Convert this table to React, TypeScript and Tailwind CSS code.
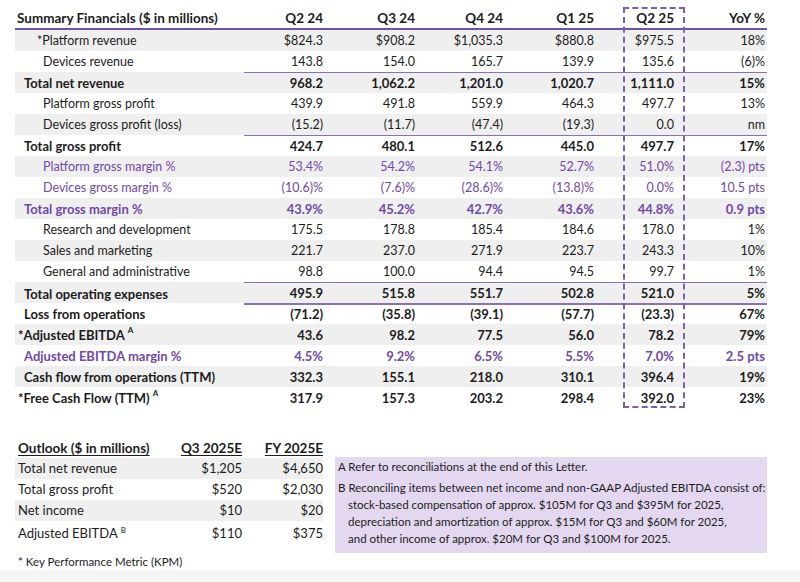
import React from 'react';

type Row = {
  label: string;
  vals: string[];
  main?: boolean;
  purple?: boolean;
  bold?: boolean;
  star?: boolean;
  sup?: string;
  ruleAbove?: boolean;
  ruleBelow?: boolean;
};

const rows: Row[] = [
  { label: 'Platform revenue', star: true, vals: ['$824.3', '$908.2', '$1,035.3', '$880.8', '$975.5', '18%'] },
  { label: 'Devices revenue', vals: ['143.8', '154.0', '165.7', '139.9', '135.6', '(6)%'] },
  { label: 'Total net revenue', main: true, bold: true, ruleAbove: true, vals: ['968.2', '1,062.2', '1,201.0', '1,020.7', '1,111.0', '15%'] },
  { label: 'Platform gross profit', vals: ['439.9', '491.8', '559.9', '464.3', '497.7', '13%'] },
  { label: 'Devices gross profit (loss)', vals: ['(15.2)', '(11.7)', '(47.4)', '(19.3)', '0.0', 'nm'] },
  { label: 'Total gross profit', main: true, bold: true, ruleAbove: true, vals: ['424.7', '480.1', '512.6', '445.0', '497.7', '17%'] },
  { label: 'Platform gross margin %', purple: true, vals: ['53.4%', '54.2%', '54.1%', '52.7%', '51.0%', '(2.3) pts'] },
  { label: 'Devices gross margin %', purple: true, vals: ['(10.6)%', '(7.6)%', '(28.6)%', '(13.8)%', '0.0%', '10.5 pts'] },
  { label: 'Total gross margin %', main: true, bold: true, purple: true, vals: ['43.9%', '45.2%', '42.7%', '43.6%', '44.8%', '0.9 pts'] },
  { label: 'Research and development', vals: ['175.5', '178.8', '185.4', '184.6', '178.0', '1%'] },
  { label: 'Sales and marketing', vals: ['221.7', '237.0', '271.9', '223.7', '243.3', '10%'] },
  { label: 'General and administrative', vals: ['98.8', '100.0', '94.4', '94.5', '99.7', '1%'] },
  { label: 'Total operating expenses', main: true, bold: true, ruleAbove: true, ruleBelow: true, vals: ['495.9', '515.8', '551.7', '502.8', '521.0', '5%'] },
  { label: 'Loss from operations', main: true, bold: true, vals: ['(71.2)', '(35.8)', '(39.1)', '(57.7)', '(23.3)', '67%'] },
  { label: 'Adjusted EBITDA', main: true, bold: true, star: true, sup: 'A', vals: ['43.6', '98.2', '77.5', '56.0', '78.2', '79%'] },
  { label: 'Adjusted EBITDA margin %', main: true, bold: true, purple: true, vals: ['4.5%', '9.2%', '6.5%', '5.5%', '7.0%', '2.5 pts'] },
  { label: 'Cash flow from operations (TTM)', main: true, bold: true, vals: ['332.3', '155.1', '218.0', '310.1', '396.4', '19%'] },
  { label: 'Free Cash Flow (TTM)', main: true, bold: true, star: true, sup: 'A', vals: ['317.9', '157.3', '203.2', '298.4', '392.0', '23%'] },
];

const heads = ['Q2 24', 'Q3 24', 'Q4 24', 'Q1 25', 'Q2 25', 'YoY %'];

const outlook = [
  { label: 'Total net revenue', q3: '$1,205', fy: '$4,650' },
  { label: 'Total gross profit', q3: '$520', fy: '$2,030' },
  { label: 'Net income', q3: '$10', fy: '$20' },
  { label: 'Adjusted EBITDA', sup: 'B', q3: '$110', fy: '$375' },
];

const grid = 'grid grid-cols-[229px_79px_92px_88px_91px_91px_82px]';

export default function App() {
  return (
    <div className="w-[800px] h-[582px] bg-white text-[#1c1c1c] font-['Lato',sans-serif] flex flex-col overflow-hidden">
      <div className="relative ml-[15px] w-[752px]">
        {/* dashed highlight round the current quarter */}
        <div className="absolute left-[608px] top-[7px] w-[62px] h-[401px] border-2 border-dashed border-[#7d5fb0]" />

        <div className={`${grid} h-[30px] border-b-2 border-[#6f53a3] items-end text-[13.5px] font-bold`}>
          <div className="pl-[2px]">Summary Financials ($ in millions)</div>
          {heads.map((h, i) => (
            <div key={h} className={`text-right ${i === 4 ? 'pr-[11px]' : i === 5 ? 'pr-[2px]' : ''}`}>{h}</div>
          ))}
        </div>

        {rows.map((r, idx) => {
          const color = r.purple ? 'text-[#7049a8]' : '';
          const weight = r.bold ? 'font-bold text-[13px]' : 'text-[12.5px]';
          return (
            <div key={r.label} className={`${grid} h-[21px] leading-[20px] ${idx % 2 === 0 ? 'bg-[#efefef]' : 'bg-white'} ${color} ${weight}`}>
              <div className={`flex items-center ${r.main ? 'pl-[9px]' : 'pl-[28px]'}`}>
                {r.star && <span className="-ml-[6px]">*</span>}
                <span>{r.label}</span>
                {r.sup && <sup className="text-[8px] ml-[3px] -top-[5px]">{r.sup}</sup>}
              </div>
              {r.vals.map((v, i) => (
                <div
                  key={i}
                  className={`flex items-center justify-end ${i === 4 ? 'pr-[11px]' : i === 5 ? 'pr-[2px]' : ''} ${r.ruleAbove ? 'border-t border-[#8a70b8]' : ''} ${r.ruleBelow ? 'border-b-2 border-[#8a70b8]' : ''}`}
                >
                  {v}
                </div>
              ))}
            </div>
          );
        })}
      </div>

      <div className="mt-[28px] ml-[15px] flex items-start gap-[12px]">
        <div className="w-[308px]">
          <div className="grid grid-cols-[150px_77px_81px] h-[22px] items-end text-[13.5px] font-bold">
            <div className="pl-[3px]"><span className="underline underline-offset-2">Outlook ($ in millions)</span></div>
            <div className="text-right"><span className="underline underline-offset-2">Q3 2025E</span></div>
            <div className="text-right"><span className="underline underline-offset-2">FY 2025E</span></div>
          </div>
          {outlook.map((o, i) => (
            <div key={o.label} className={`grid grid-cols-[150px_77px_81px] h-[21px] items-center text-[13px] ${i % 2 === 0 ? 'bg-[#efefef]' : 'bg-white'} ${i === 3 ? 'mt-[2px]' : ''}`}>
              <div className="pl-[3px]">
                {o.label}
                {o.sup && <sup className="text-[8px] ml-[3px] -top-[5px]">{o.sup}</sup>}
              </div>
              <div className="text-right">{o.q3}</div>
              <div className="text-right">{o.fy}</div>
            </div>
          ))}
          <div className="mt-[9px] pl-[3px] text-[11.5px]">* Key Performance Metric (KPM)</div>
        </div>

        <div className="mt-[21px] w-[432px] bg-[#e3d8f0] pl-[3px] pt-[1px] pb-[6px] text-[11.5px] leading-[17px]">
          <div>A Refer to reconciliations at the end of this Letter.</div>
          <div className="mt-[4px]">B Reconciling items between net income and non-GAAP Adjusted EBITDA consist of:</div>
          <div className="pl-[10px]">
            <div>stock-based compensation of approx. $105M for Q3 and $395M for 2025,</div>
            <div>depreciation and amortization of approx. $15M for Q3 and $60M for 2025,</div>
            <div>and other income of approx. $20M for Q3 and $100M for 2025.</div>
          </div>
        </div>
      </div>

      <div className="mt-auto h-[12px] bg-[#f6f6f6]" />
    </div>
  );
}
